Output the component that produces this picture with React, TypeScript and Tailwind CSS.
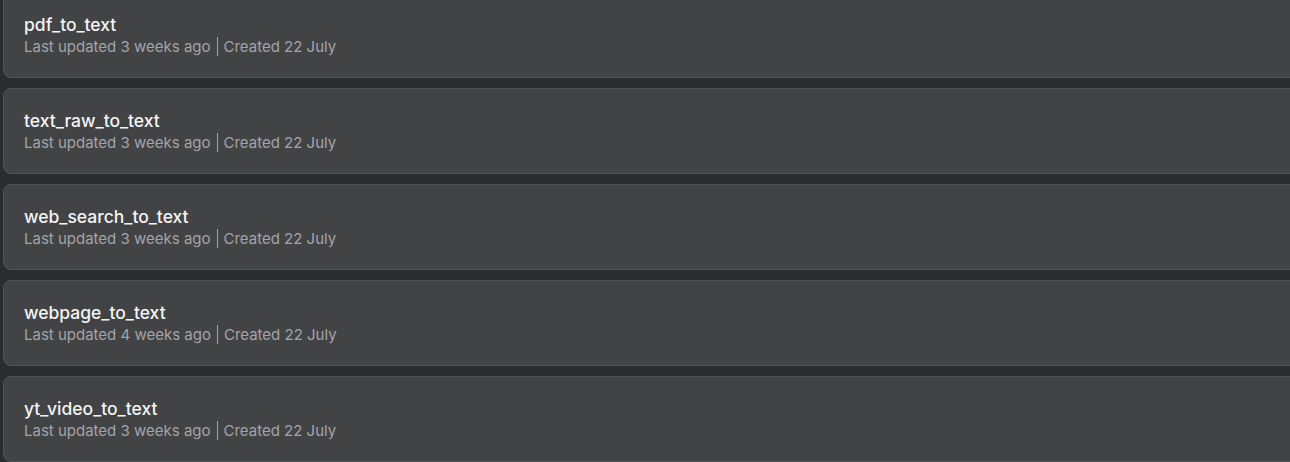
const items = [
  { name: "pdf_to_text", updated: "3 weeks ago" },
  { name: "text_raw_to_text", updated: "3 weeks ago" },
  { name: "web_search_to_text", updated: "3 weeks ago" },
  { name: "webpage_to_text", updated: "4 weeks ago" },
  { name: "yt_video_to_text", updated: "3 weeks ago" },
];

export default function App() {
  return (
    <div className="h-[462px] w-[1290px] overflow-hidden bg-[#2b2c2e] font-['Inter',sans-serif]">
      <div className="-mt-2 ml-[3px] -mr-5 flex flex-col gap-[10px]">
        {items.map((it) => (
          <div
            key={it.name}
            className="flex h-[86px] flex-col justify-center rounded-lg border border-[#525355] bg-[#424345] px-5"
          >
            <div className="text-[17.5px] font-medium leading-[22px] text-[#f3f3f4]">{it.name}</div>
            <div className="flex items-center text-[15px] leading-[21px] text-[#a2a4a8]">
              <span>Last updated {it.updated}</span>
              <span className="mx-[6px] h-[19px] w-px bg-[#a2a4a8]" />
              <span>Created 22 July</span>
            </div>
          </div>
        ))}
      </div>
    </div>
  );
}
